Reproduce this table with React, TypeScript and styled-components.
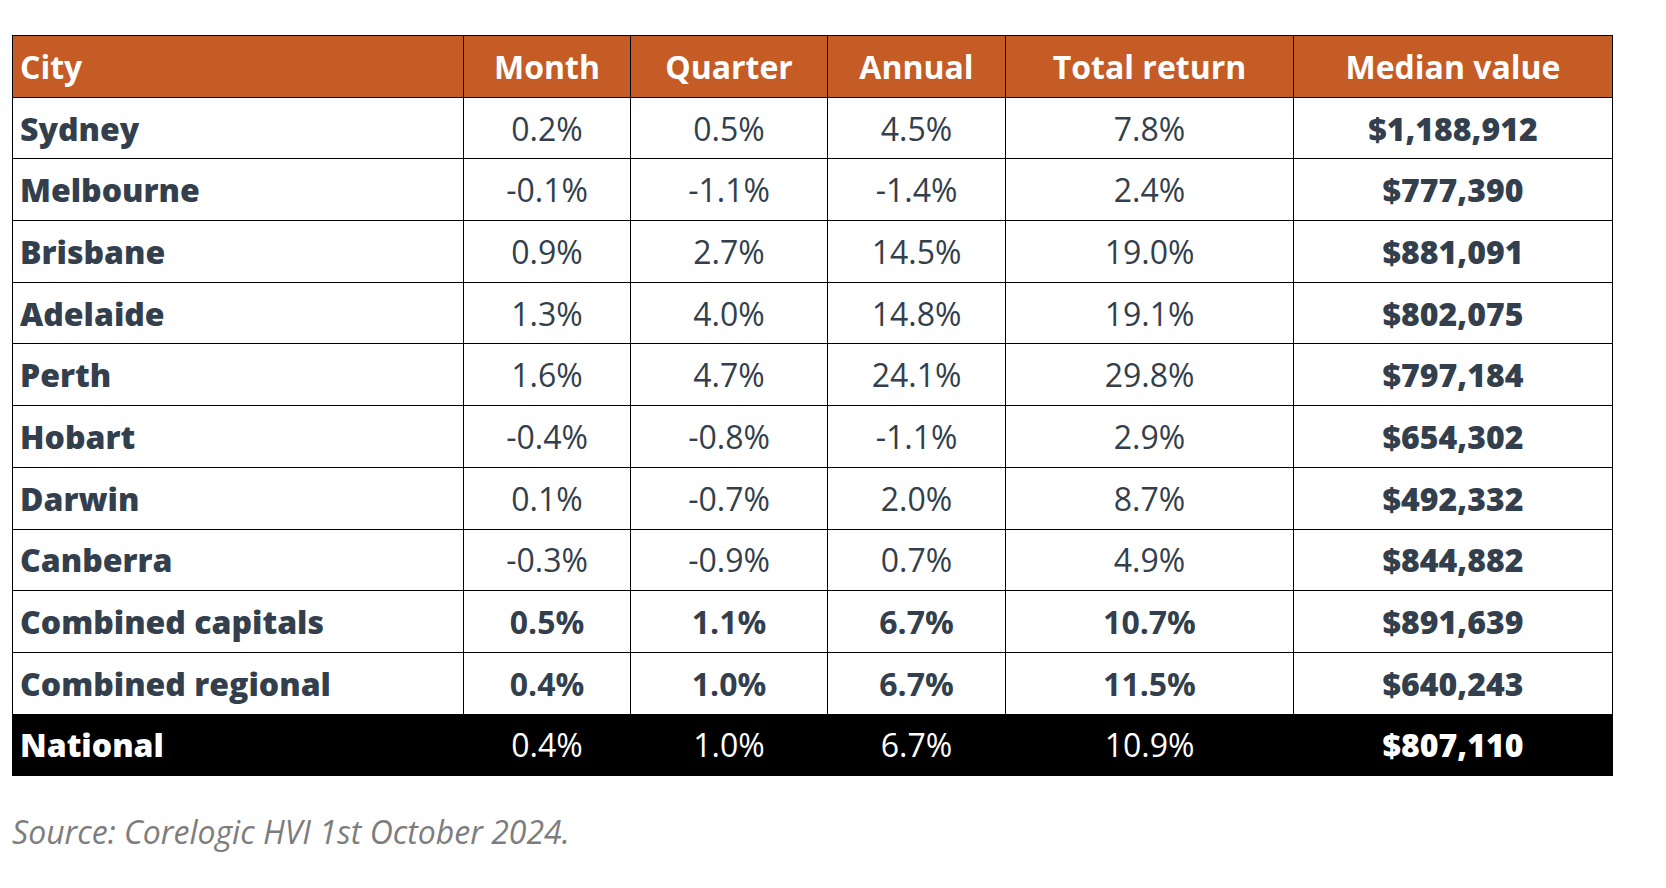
import React from "react";
import styled, { createGlobalStyle } from "styled-components";

const GlobalStyle = createGlobalStyle`
  html, body {
    margin: 0;
    padding: 0;
    background: #fff;
    font-family: "Open Sans", "Liberation Sans", sans-serif;
  }
`;

type Row = {
  city: string;
  values: string[];
  median: string;
  variant?: "plain" | "strong" | "national";
};

const rows: Row[] = [
  { city: "Sydney", values: ["0.2%", "0.5%", "4.5%", "7.8%"], median: "$1,188,912" },
  { city: "Melbourne", values: ["-0.1%", "-1.1%", "-1.4%", "2.4%"], median: "$777,390" },
  { city: "Brisbane", values: ["0.9%", "2.7%", "14.5%", "19.0%"], median: "$881,091" },
  { city: "Adelaide", values: ["1.3%", "4.0%", "14.8%", "19.1%"], median: "$802,075" },
  { city: "Perth", values: ["1.6%", "4.7%", "24.1%", "29.8%"], median: "$797,184" },
  { city: "Hobart", values: ["-0.4%", "-0.8%", "-1.1%", "2.9%"], median: "$654,302" },
  { city: "Darwin", values: ["0.1%", "-0.7%", "2.0%", "8.7%"], median: "$492,332" },
  { city: "Canberra", values: ["-0.3%", "-0.9%", "0.7%", "4.9%"], median: "$844,882" },
  { city: "Combined capitals", values: ["0.5%", "1.1%", "6.7%", "10.7%"], median: "$891,639", variant: "strong" },
  { city: "Combined regional", values: ["0.4%", "1.0%", "6.7%", "11.5%"], median: "$640,243", variant: "strong" },
  { city: "National", values: ["0.4%", "1.0%", "6.7%", "10.9%"], median: "$807,110", variant: "national" },
];

const columns = [
  { label: "City", width: 451, align: "left" },
  { label: "Month", width: 167, align: "center" },
  { label: "Quarter", width: 197, align: "center" },
  { label: "Annual", width: 178, align: "center" },
  { label: "Total return", width: 288, align: "center" },
  { label: "Median value", width: 319, align: "center" },
] as const;

const Page = styled.div`
  padding: 35px 0 0 12px;
`;

const Table = styled.table`
  width: 1600px;
  border-collapse: collapse;
  table-layout: fixed;
  border: 1px solid #000;
`;

const HeadCell = styled.th<{ $align: string }>`
  height: 60.7px;
  padding: 0 7px;
  background: #c55b25;
  color: #fff;
  font-size: 32px;
  font-weight: 700;
  text-align: ${p => p.$align};
  border: 1px solid #000;
  vertical-align: middle;
`;

const BodyRow = styled.tr<{ $national: boolean }>`
  background: ${p => (p.$national ? "#000" : "#fff")};
  color: ${p => (p.$national ? "#fff" : "#333f4c")};
`;

const CityCell = styled.td`
  height: 60.7px;
  padding: 0 7px;
  font-size: 32px;
  font-weight: 800;
  text-align: left;
  border: 1px solid #000;
  vertical-align: middle;
`;

const ValueCell = styled.td<{ $strong: boolean }>`
  height: 60.7px;
  padding: 0 7px;
  font-size: 32px;
  font-weight: ${p => (p.$strong ? 700 : 400)};
  text-align: center;
  border: 1px solid #000;
  vertical-align: middle;
`;

const MedianCell = styled.td`
  height: 60.7px;
  padding: 0 7px;
  font-size: 32px;
  font-weight: 800;
  text-align: center;
  border: 1px solid #000;
  vertical-align: middle;
`;

const Source = styled.p`
  margin: 34px 0 0 0;
  font-size: 32px;
  font-style: italic;
  color: #7d7d7d;
`;

export default function App() {
  return (
    <>
      <GlobalStyle />
      <Page>
        <Table>
          <colgroup>
            {columns.map(c => (
              <col key={c.label} style={{ width: c.width }} />
            ))}
          </colgroup>
          <thead>
            <tr>
              {columns.map(c => (
                <HeadCell key={c.label} $align={c.align}>
                  {c.label}
                </HeadCell>
              ))}
            </tr>
          </thead>
          <tbody>
            {rows.map(r => (
              <BodyRow key={r.city} $national={r.variant === "national"}>
                <CityCell>{r.city}</CityCell>
                {r.values.map((v, i) => (
                  <ValueCell key={i} $strong={r.variant === "strong"}>
                    {v}
                  </ValueCell>
                ))}
                <MedianCell>{r.median}</MedianCell>
              </BodyRow>
            ))}
          </tbody>
        </Table>
        <Source>Source: Corelogic HVI 1st October 2024.</Source>
      </Page>
    </>
  );
}
